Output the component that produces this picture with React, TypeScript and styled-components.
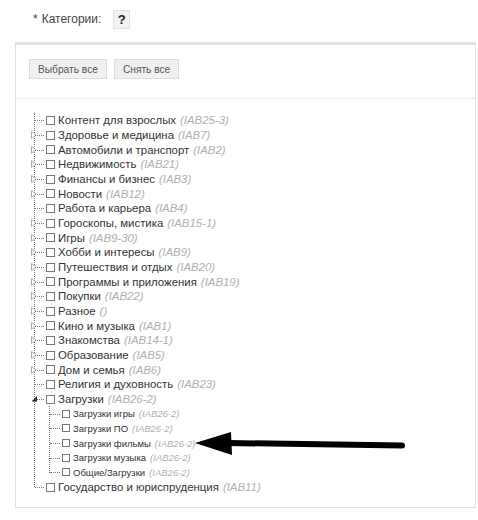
import React from "react";
import styled, { createGlobalStyle } from "styled-components";

const GlobalStyle = createGlobalStyle`
  body {
    margin: 0;
    background: #fff;
    font-family: "Liberation Sans", Arial, sans-serif;
    color: #333;
  }
`;

const Page = styled.div`
  position: relative;
  width: 478px;
  height: 520px;
`;

const Header = styled.div`
  display: flex;
  align-items: center;
  height: 38px;
  padding-left: 33px;
  padding-bottom: 4px;
  font-size: 12px;
  color: #444;
`;

const Star = styled.span`
  margin-right: 4px;
`;

const HelpBox = styled.span`
  display: inline-flex;
  align-items: center;
  justify-content: center;
  width: 17px;
  height: 19px;
  margin-left: 12px;
  background: #f2f2f2;
  border: 1px solid #e2e2e2;
  font-weight: bold;
  font-size: 13px;
  color: #222;
  box-sizing: border-box;
`;

const Panel = styled.div`
  margin-left: 15px;
  width: 461px;
  height: 466px;
  box-sizing: border-box;
  border: 1px solid #e2e2e2;
  border-top: 3px solid #e2e2e2;
`;

const Toolbar = styled.div`
  display: flex;
  gap: 7px;
  padding: 14px 13px 19px;
  border-bottom: 1px dotted #d8d8d8;
`;

const Button = styled.button`
  height: 20px;
  padding: 0 8px;
  background: #f0f0f0;
  border: 1px solid #dcdcdc;
  border-radius: 0;
  font-family: "Liberation Sans", Arial, sans-serif;
  font-size: 10.2px;
  color: #555;
`;

const Tree = styled.div<{ $sub?: boolean }>`
  position: relative;
  margin-left: ${(p) => (p.$sub ? 15 : 18)}px;
  margin-top: ${(p) => (p.$sub ? 0 : 14)}px;
  &::before {
    content: "";
    position: absolute;
    left: 0;
    top: 0;
    bottom: 7px;
    border-left: 1px dotted #777;
  }
`;

const Row = styled.div<{ $sub?: boolean }>`
  position: relative;
  display: flex;
  align-items: center;
  height: 14.68px;
  font-size: ${(p) => (p.$sub ? 9.5 : 11.4)}px;
  white-space: nowrap;
`;

const Branch = styled.span<{ $sub?: boolean }>`
  position: relative;
  width: ${(p) => (p.$sub ? 11 : 10)}px;
  height: 100%;
  &::after {
    content: "";
    position: absolute;
    left: 1px;
    right: 0;
    top: 50%;
    border-top: 1px dotted #777;
  }
`;

const Toggle = styled.svg`
  position: absolute;
  left: -3px;
  top: 50%;
  transform: translateY(-50%);
`;

const Box = styled.span<{ $sub?: boolean }>`
  width: ${(p) => (p.$sub ? 8 : 9)}px;
  height: ${(p) => (p.$sub ? 8 : 9)}px;
  margin-left: 2px;
  margin-right: 3px;
  border: 1px solid #777;
  box-sizing: border-box;
  background: #fff;
`;

const Code = styled.span`
  margin-left: 4px;
  color: #b0b0b0;
  font-style: italic;
`;

const Arrow = styled.svg`
  position: absolute;
  left: 0;
  top: 0;
  pointer-events: none;
`;

type Item = { name: string; code: string; more?: boolean; open?: boolean; kids?: Item[] };

const items: Item[] = [
  { name: "Контент для взрослых", code: "IAB25-3" },
  { name: "Здоровье и медицина", code: "IAB7", more: true },
  { name: "Автомобили и транспорт", code: "IAB2", more: true },
  { name: "Недвижимость", code: "IAB21", more: true },
  { name: "Финансы и бизнес", code: "IAB3", more: true },
  { name: "Новости", code: "IAB12", more: true },
  { name: "Работа и карьера", code: "IAB4" },
  { name: "Гороскопы, мистика", code: "IAB15-1", more: true },
  { name: "Игры", code: "IAB9-30", more: true },
  { name: "Хобби и интересы", code: "IAB9", more: true },
  { name: "Путешествия и отдых", code: "IAB20", more: true },
  { name: "Программы и приложения", code: "IAB19", more: true },
  { name: "Покупки", code: "IAB22", more: true },
  { name: "Разное", code: "", more: true },
  { name: "Кино и музыка", code: "IAB1", more: true },
  { name: "Знакомства", code: "IAB14-1", more: true },
  { name: "Образование", code: "IAB5", more: true },
  { name: "Дом и семья", code: "IAB6", more: true },
  { name: "Религия и духовность", code: "IAB23" },
  {
    name: "Загрузки",
    code: "IAB26-2",
    open: true,
    kids: [
      { name: "Загрузки игры", code: "IAB26-2" },
      { name: "Загрузки ПО", code: "IAB26-2" },
      { name: "Загрузки фильмы", code: "IAB26-2" },
      { name: "Загрузки музыка", code: "IAB26-2" },
      { name: "Общие/Загрузки", code: "IAB26-2" },
    ],
  },
  { name: "Государство и юриспруденция", code: "IAB11" },
];

const Node = ({ item, sub }: { item: Item; sub?: boolean }) => (
  <>
    <Row $sub={sub}>
      {item.more && (
        <Toggle width="6" height="8" viewBox="0 0 6 8">
          <path d="M0.5 0.5 L5 4 L0.5 7.5 Z" fill="#fff" stroke="#aaa" strokeWidth="1" />
        </Toggle>
      )}
      {item.open && (
        <Toggle width="7" height="7" viewBox="0 0 7 7">
          <path d="M6 0.5 L6 6 L0.5 6 Z" fill="#222" />
        </Toggle>
      )}
      <Branch $sub={sub} />
      <Box $sub={sub} />
      <span>{item.name}</span>
      <Code>({item.code})</Code>
    </Row>
    {item.kids && (
      <Tree $sub>
        {item.kids.map((k) => (
          <Node key={k.name} item={k} sub />
        ))}
      </Tree>
    )}
  </>
);

export default function App() {
  return (
    <Page>
      <GlobalStyle />
      <Header>
        <Star>*</Star>
        <span>Категории:</span>
        <HelpBox>?</HelpBox>
      </Header>
      <Panel>
        <Toolbar>
          <Button>Выбрать все</Button>
          <Button>Снять все</Button>
        </Toolbar>
        <Tree>
          {items.map((it) => (
            <Node key={it.name} item={it} />
          ))}
        </Tree>
      </Panel>
      <Arrow width="478" height="520" viewBox="0 0 478 520">
        <line x1="228" y1="443" x2="402" y2="445.5" stroke="#000" strokeWidth="6" strokeLinecap="round" />
        <path d="M195 443 L231 432 L232 455 Z" fill="#000" />
      </Arrow>
    </Page>
  );
}
